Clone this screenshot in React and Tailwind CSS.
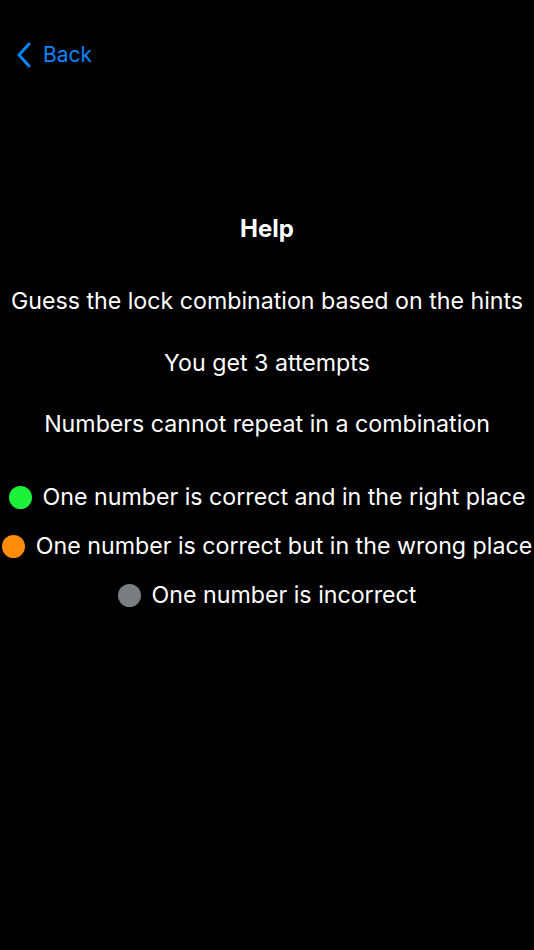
export default function App() {
  const font = { fontFamily: 'Inter, "Noto Sans", sans-serif' };
  return (
    <div className="w-[534px] h-[950px] bg-black text-white relative" style={font}>
      <div className="flex items-center pt-[40px] pl-[16px] h-[29px] box-content text-[#0a84ff]">
        <svg width="17" height="26" viewBox="0 0 17 26" fill="none">
          <path d="M13 2 L3 13 L13 24" stroke="#0a84ff" strokeWidth="3" strokeLinecap="round" strokeLinejoin="round" />
        </svg>
        <span className="ml-[10px] text-[21px] leading-none">Back</span>
      </div>
      <div className="flex flex-col items-center text-[23.2px] leading-[28px]">
        <div className="mt-[146px] font-bold text-[24px]">Help</div>
        <div className="mt-[44px] whitespace-nowrap">Guess the lock combination based on the hints</div>
        <div className="mt-[34px]">You get 3 attempts</div>
        <div className="mt-[33px]">Numbers cannot repeat in a combination</div>
        <div className="mt-[45px] flex items-center gap-[11px] whitespace-nowrap">
          <span className="w-[23px] h-[23px] rounded-full bg-[#1cf23a]"></span>
          <span>One number is correct and in the right place</span>
        </div>
        <div className="mt-[21px] flex items-center gap-[11px] whitespace-nowrap">
          <span className="w-[23px] h-[23px] rounded-full bg-[#ff8c0a]"></span>
          <span>One number is correct but in the wrong place</span>
        </div>
        <div className="mt-[21px] flex items-center gap-[11px] whitespace-nowrap">
          <span className="w-[23px] h-[23px] rounded-full bg-[#7b7e81]"></span>
          <span>One number is incorrect</span>
        </div>
      </div>
    </div>
  );
}
